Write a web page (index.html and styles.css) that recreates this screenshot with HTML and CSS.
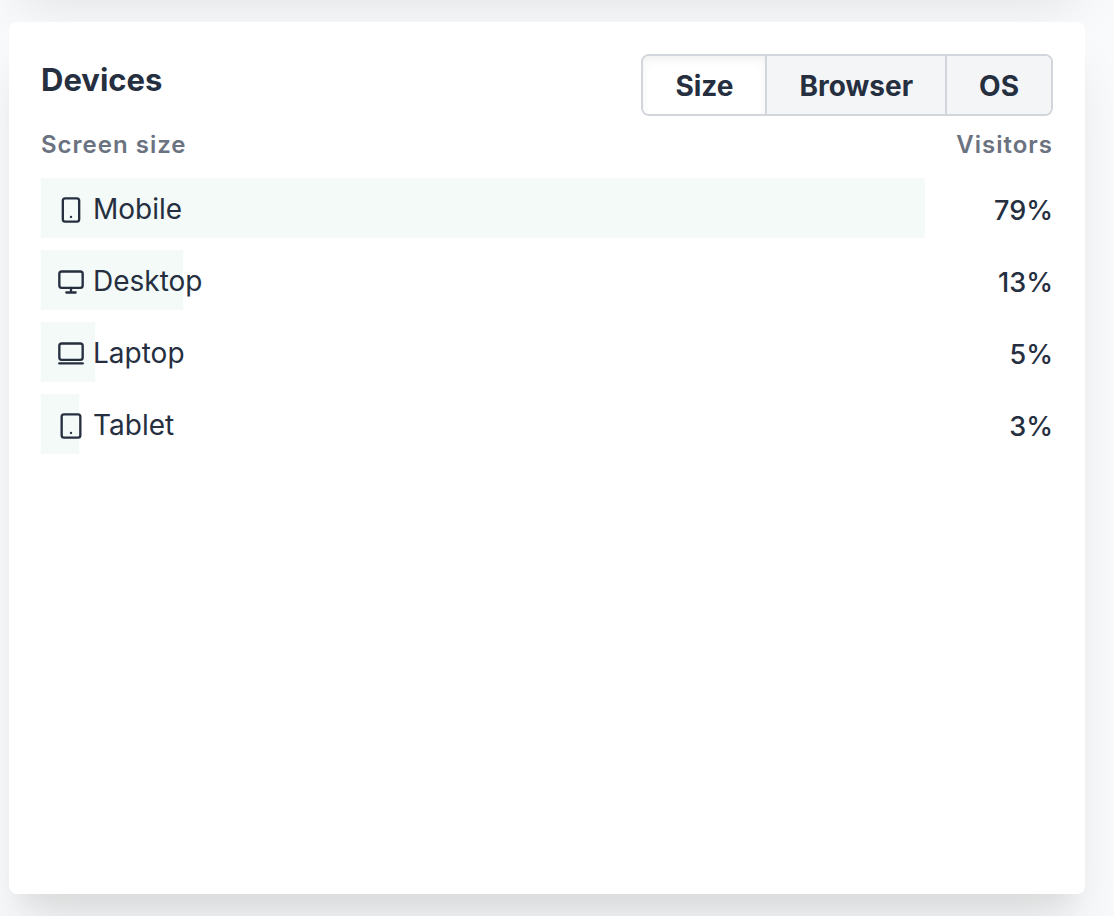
FILE: index.html
```html
<!DOCTYPE html>
<html lang="en">
<head>
<meta charset="utf-8">
<title>Devices</title>
<link rel="stylesheet" href="styles.css">
</head>
<body>
<main class="dashboard">
  <div class="card card-previous"></div>
  <section class="card devices">
    <header class="card-header">
      <h1 class="title">Devices</h1>
      <div class="tabs">
        <button type="button" class="tab tab-active" aria-pressed="true">Size</button>
        <button type="button" class="tab" aria-pressed="false">Browser</button>
        <button type="button" class="tab" aria-pressed="false">OS</button>
      </div>
    </header>
    <table class="report">
      <thead>
        <tr><th scope="col">Screen size</th><th scope="col" class="visitors">Visitors</th></tr>
      </thead>
      <tbody>
        <tr>
          <td><div class="bar" style="width:100%"><svg class="icon" viewBox="0 0 24 24"><rect x="5" y="2" width="14" height="20" rx="2"/><path d="M12 18h.01"/></svg><span>Mobile</span></div></td>
          <td class="visitors">79%</td>
        </tr>
        <tr>
          <td><div class="bar" style="width:16.1%"><svg class="icon" viewBox="0 0 24 24"><rect x="2" y="3" width="20" height="14" rx="2"/><path d="M8 21h8M12 17v4"/></svg><span>Desktop</span></div></td>
          <td class="visitors">13%</td>
        </tr>
        <tr>
          <td><div class="bar" style="width:6.1%"><svg class="icon" viewBox="0 0 24 24"><rect x="2" y="3" width="20" height="14" rx="2"/><path d="M2 20h20"/></svg><span>Laptop</span></div></td>
          <td class="visitors">5%</td>
        </tr>
        <tr>
          <td><div class="bar" style="width:4.3%"><svg class="icon" viewBox="0 0 24 24"><rect x="4" y="2" width="16" height="20" rx="2"/><path d="M12 18h.01"/></svg><span>Tablet</span></div></td>
          <td class="visitors">3%</td>
        </tr>
      </tbody>
    </table>
  </section>
</main>
</body>
</html>
```
FILE: styles.css
```css
* {
  box-sizing: border-box;
}

body {
  margin: 0;
  background: #f9fafb;
  color: #252f3f;
  font-family: Inter, "Liberation Sans", sans-serif;
  font-size: 28px;
  line-height: 40px;
}

.dashboard {
  height: 100vh;
  padding: 0 29px 22px 9px;
  display: flex;
  flex-direction: column;
  gap: 48px;
  overflow: hidden;
}

.card {
  background: #fff;
  border-radius: 8px;
  box-shadow: 0 40px 50px -10px rgba(0, 0, 0, 0.1), 0 20px 20px -10px rgba(0, 0, 0, 0.04);
}

/* The card above is scrolled out of view; only its shadow shows. */
.card-previous {
  flex: none;
  height: 400px;
  margin-top: -426px;
}

.devices {
  flex: 1;
  padding: 32px;
}

.card-header {
  display: flex;
  justify-content: space-between;
  align-items: flex-start;
}

.title {
  margin: 0;
  font-size: 31px;
  line-height: 52px;
  font-weight: 700;
}

.tabs {
  display: flex;
  border: 2px solid #d2d6dc;
  border-radius: 8px;
  overflow: hidden;
}

.tab {
  padding: 10px 32px 8px;
  border: 0;
  background: #f4f5f7;
  color: inherit;
  font: inherit;
  font-weight: 700;
  line-height: 40px;
}

.tab + .tab {
  border-left: 2px solid #d2d6dc;
}

.tab-active {
  background: #fff;
  box-shadow: inset 0 4px 8px rgba(0, 0, 0, 0.06);
}

.report {
  width: 100%;
  border-collapse: collapse;
  table-layout: fixed;
}

.report th {
  padding: 9px 0 11px;
  color: #6b7280;
  font-size: 24px;
  font-weight: 600;
  letter-spacing: 1px;
  text-align: left;
}

.report td {
  padding: 2px 0 10px;
}

.report .visitors {
  width: 128px;
  text-align: right;
}

.report td.visitors {
  padding-top: 8px;
  font-size: 27px;
  font-weight: 500;
}

.bar {
  display: flex;
  align-items: center;
  gap: 8px;
  height: 60px;
  padding: 2px 0 0 16px;
  background: #f3faf7;
  white-space: nowrap;
}

.icon {
  flex: none;
  width: 28px;
  height: 28px;
  margin-top: 2px;
  fill: none;
  stroke: currentColor;
  stroke-width: 2;
  stroke-linecap: round;
  stroke-linejoin: round;
}
```
